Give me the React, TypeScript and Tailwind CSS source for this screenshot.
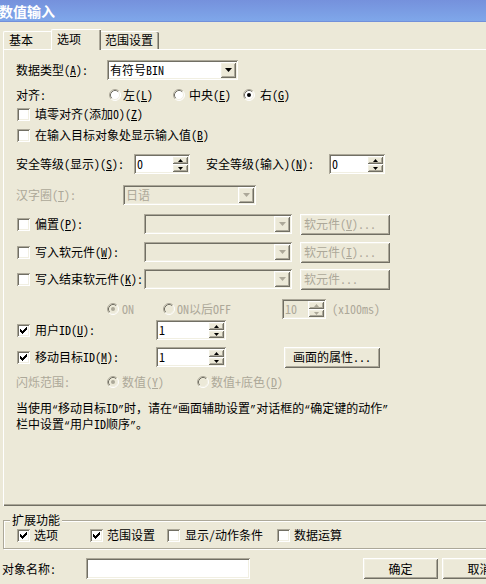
import React from "react";

const sunken =
  "shadow-[inset_1px_1px_0_#ACA899,inset_-1px_-1px_0_#FFFFFF,inset_2px_2px_0_#716F64,inset_-2px_-2px_0_#F1EFE2]";
const raised =
  "shadow-[inset_1px_1px_0_#FFFFFF,inset_-1px_-1px_0_#716F64,inset_2px_2px_0_#F1EFE2,inset_-2px_-2px_0_#ACA899]";
const dis = "text-[#ACA899]";

// classic check mark, pixel by pixel
const CHECK = [
  [3, 5], [3, 6], [3, 7],
  [4, 6], [4, 7], [4, 8],
  [5, 7], [5, 8], [5, 9],
  [6, 6], [6, 7], [6, 8],
  [7, 5], [7, 6], [7, 7],
  [8, 4], [8, 5], [8, 6],
  [9, 3], [9, 4], [9, 5],
];

function Acc({ k }: { k: string }) {
  return (
    <>
      (<span className="underline underline-offset-1">{k}</span>)
    </>
  );
}

// half-width curly quotes, as the dialog font draws them
function Q({ children }: { children: string }) {
  return <span className="font-['Liberation_Mono',monospace] text-[10px]">{children}</span>;
}

function Check({ checked = false }: { checked?: boolean }) {
  return (
    <span className={`inline-flex w-[13px] h-[13px] shrink-0 bg-white ${sunken}`}>
      {checked && (
        <svg width="13" height="13" viewBox="0 0 13 13" shapeRendering="crispEdges">
          {CHECK.map(([x, y]) => (
            <rect key={`${x}-${y}`} x={x} y={y} width="1" height="1" fill="#000" />
          ))}
        </svg>
      )}
    </span>
  );
}

function Radio({ on = false, disabled = false }: { on?: boolean; disabled?: boolean }) {
  return (
    <svg width="12" height="12" viewBox="0 0 12 12" className="shrink-0">
      <circle cx="6" cy="6" r="5" fill={disabled ? "#ECE9D8" : "#FFFFFF"} />
      <path d="M2.11 9.89 A5.5 5.5 0 0 1 9.89 2.11" fill="none" stroke="#ACA899" />
      <path d="M9.89 2.11 A5.5 5.5 0 0 1 2.11 9.89" fill="none" stroke="#FFFFFF" />
      <path d="M2.82 9.18 A4.5 4.5 0 0 1 9.18 2.82" fill="none" stroke="#716F64" />
      <path d="M9.18 2.82 A4.5 4.5 0 0 1 2.82 9.18" fill="none" stroke="#F1EFE2" />
      {on && <circle cx="6" cy="6" r="2" fill={disabled ? "#ACA899" : "#000"} />}
    </svg>
  );
}

function Combo({ w, text = "", disabled = false }: { w: string; text?: string; disabled?: boolean }) {
  return (
    <div className={`${w} shrink-0 h-[20px] flex items-center p-[2px] ${disabled ? "bg-[#ECE9D8]" : "bg-white"} ${sunken}`}>
      <span className={`flex-1 pl-[1px] ${disabled ? dis : ""}`}>{text}</span>
      <span className={`w-[16px] h-[16px] flex items-center justify-center bg-[#ECE9D8] ${raised}`}>
        <svg width="7" height="4" viewBox="0 0 7 4">
          <path d="M0 0H7L3.5 4Z" fill={disabled ? "#ACA899" : "#000"} />
        </svg>
      </span>
    </div>
  );
}

function Spin({ w, value, disabled = false }: { w: string; value: string; disabled?: boolean }) {
  const arrow = disabled ? "#ACA899" : "#000";
  return (
    <div className={`${w} shrink-0 h-[20px] flex p-[2px] ${disabled ? "bg-[#ECE9D8]" : "bg-white"} ${sunken}`}>
      <span className={`flex-1 flex items-center pl-[1px] ${disabled ? dis : ""}`}>{value}</span>
      <span className="w-[16px] flex flex-col">
        <span className={`flex-1 flex items-center justify-center bg-[#ECE9D8] ${raised}`}>
          <svg width="5" height="3" viewBox="0 0 5 3">
            <path d="M0 3H5L2.5 0Z" fill={arrow} />
          </svg>
        </span>
        <span className={`flex-1 flex items-center justify-center bg-[#ECE9D8] ${raised}`}>
          <svg width="5" height="3" viewBox="0 0 5 3">
            <path d="M0 0H5L2.5 3Z" fill={arrow} />
          </svg>
        </span>
      </span>
    </div>
  );
}

function Btn({
  w,
  children,
  disabled = false,
}: {
  w: string;
  children: React.ReactNode;
  disabled?: boolean;
}) {
  return (
    <div
      className={`${w} shrink-0 h-[21px] flex items-center bg-[#ECE9D8] ${raised} ${
        disabled ? `${dis} justify-start pl-[4px]` : "justify-center"
      }`}
    >
      {children}
    </div>
  );
}

export default function App() {
  return (
    <div className="w-[486px] h-[584px] overflow-hidden bg-[#ECE9D8] text-black text-[12px] leading-none font-['Noto_Sans_Mono_CJK_SC','Noto_Sans_CJK_SC',sans-serif]">
      {/* title bar */}
      <div className="h-[22px] flex items-center bg-linear-to-b from-[#7591DC] via-[#7A9CE3] to-[#7FA7EA] border-b border-[#7290DA]">
        <span className="-ml-[1px] text-[14px] font-bold text-white">数值输入</span>
      </div>

      {/* tabs */}
      <div className="mt-[7px] h-[20px] flex items-end pl-[3px]">
        <div className="w-[48px] h-[18px] pl-[5px] pt-[2px] border-l border-t border-white rounded-tl-[2px]">基本</div>
        <div className="relative z-10 w-[50px] h-[21px] -mb-px pl-[5px] pt-[3px] bg-[#ECE9D8] border-l border-t border-white rounded-tl-[2px] shadow-[inset_-1px_0_0_#716F64,inset_-2px_0_0_#ACA899]">
          选项
        </div>
        <div className="w-[58px] h-[18px] pl-[4px] pt-[2px] border-t border-white rounded-tr-[2px] shadow-[inset_-1px_0_0_#716F64,inset_-2px_0_0_#ACA899]">
          范围设置
        </div>
      </div>

      {/* tab page */}
      <div className="ml-[3px] w-[500px] h-[457px] border-l border-t border-white pl-[12px] shadow-[inset_0_-1px_0_#716F64,inset_0_-2px_0_#ACA899]">
        <div className="mt-[10px] h-[20px] flex items-center">
          <span className="w-[91px]">
            数据类型<Acc k="A" />:
          </span>
          <Combo w="w-[131px]" text="有符号BIN" />
        </div>

        <div className="mt-[8px] h-[14px] flex items-center">
          <span className="w-[93px]">对齐:</span>
          <span className="w-[64px] flex items-center">
            <Radio />
            <span className="ml-[2px]">
              左<Acc k="L" />
            </span>
          </span>
          <span className="w-[70px] flex items-center">
            <Radio />
            <span className="ml-[4px]">
              中央<Acc k="E" />
            </span>
          </span>
          <span className="flex items-center">
            <Radio on />
            <span className="ml-[5px]">
              右<Acc k="G" />
            </span>
          </span>
        </div>

        <div className="mt-[5px] h-[14px] flex items-center pl-[1px]">
          <Check />
          <span className="ml-[5px]">
            填零对齐(添加0)<Acc k="Z" />
          </span>
        </div>

        <div className="mt-[7px] h-[14px] flex items-center pl-[1px]">
          <Check />
          <span className="ml-[5px]">
            在输入目标对象处显示输入值<Acc k="B" />
          </span>
        </div>

        <div className="mt-[12px] h-[20px] flex items-center">
          <span className="w-[118px]">
            安全等级(显示)<Acc k="S" />:
          </span>
          <Spin w="w-[56px]" value="0" />
          <span className="ml-[16px] w-[123px]">
            安全等级(输入)<Acc k="N" />:
          </span>
          <Spin w="w-[56px]" value="0" />
        </div>

        <div className="mt-[11px] h-[20px] flex items-center">
          <span className={`w-[107px] ${dis}`}>
            汉字圈<Acc k="T" />:
          </span>
          <Combo w="w-[133px]" text="日语" disabled />
        </div>

        <div className="mt-[9px] h-[20px] flex items-center">
          <span className="w-[128px] flex items-center pl-[1px]">
            <Check />
            <span className="ml-[5px]">
              偏置<Acc k="P" />:
            </span>
          </span>
          <Combo w="w-[148px]" disabled />
          <span className="ml-[8px]">
            <Btn w="w-[90px]" disabled>
              软元件<Acc k="V" />...
            </Btn>
          </span>
        </div>

        <div className="mt-[8px] h-[20px] flex items-center">
          <span className="w-[128px] flex items-center pl-[1px]">
            <Check />
            <span className="ml-[5px]">
              写入软元件<Acc k="W" />:
            </span>
          </span>
          <Combo w="w-[148px]" disabled />
          <span className="ml-[8px]">
            <Btn w="w-[90px]" disabled>
              软元件<Acc k="I" />...
            </Btn>
          </span>
        </div>

        <div className="mt-[7px] h-[20px] flex items-center">
          <span className="w-[128px] flex items-center pl-[1px]">
            <Check />
            <span className="ml-[5px]">
              写入结束软元件<Acc k="K" />:
            </span>
          </span>
          <Combo w="w-[148px]" disabled />
          <span className="ml-[8px]">
            <Btn w="w-[90px]" disabled>
              软元件...
            </Btn>
          </span>
        </div>

        <div className="mt-[10px] h-[20px] flex items-center">
          <span className="w-[91px]" />
          <span className="w-[56px] flex items-center">
            <Radio on disabled />
            <span className={`ml-[3px] ${dis}`}>ON</span>
          </span>
          <span className="w-[119px] flex items-center">
            <Radio disabled />
            <span className={`ml-[2px] ${dis}`}>ON以后OFF</span>
          </span>
          <Spin w="w-[44px]" value="10" disabled />
          <span className={`ml-[6px] ${dis}`}>(x100ms)</span>
        </div>

        <div className="mt-[1px] h-[20px] flex items-center">
          <span className="w-[140px] flex items-center pl-[1px]">
            <Check checked />
            <span className="ml-[5px]">
              用户ID<Acc k="U" />:
            </span>
          </span>
          <Spin w="w-[70px]" value="1" />
        </div>

        <div className="mt-[7px] h-[20px] flex items-center">
          <span className="w-[140px] flex items-center pl-[1px]">
            <Check checked />
            <span className="ml-[5px]">
              移动目标ID<Acc k="M" />:
            </span>
          </span>
          <Spin w="w-[70px]" value="1" />
          <span className="ml-[58px]">
            <Btn w="w-[96px]">画面的属性...</Btn>
          </span>
        </div>

        <div className="mt-[8px] h-[14px] flex items-center">
          <span className={`w-[91px] ${dis}`}>闪烁范围:</span>
          <span className="w-[90px] flex items-center">
            <Radio on disabled />
            <span className={`ml-[3px] ${dis}`}>
              数值<Acc k="Y" />
            </span>
          </span>
          <span className="flex items-center">
            <Radio disabled />
            <span className={`ml-[2px] ${dis}`}>
              数值+底色<Acc k="D" />
            </span>
          </span>
        </div>

        <div className="mt-[12px] leading-[13px]">
          <div>
            当使用<Q>“</Q>移动目标ID<Q>”</Q>时，请在<Q>“</Q>画面辅助设置<Q>”</Q>对话框的<Q>“</Q>确定键的动作<Q>”</Q>
          </div>
          <div>
            栏中设置<Q>“</Q>用户ID顺序<Q>”</Q>。
          </div>
        </div>
      </div>

      {/* extension group */}
      <fieldset className="mt-[8px] ml-[3px] w-[500px] min-w-0 border border-[#ACA899] shadow-[inset_1px_1px_0_#FFFFFF,1px_1px_0_#FFFFFF]">
        <legend className="ml-[6px] px-[2px] leading-[12px] bg-[#ECE9D8]">扩展功能</legend>
        <div className="h-[18px] mb-[4px] flex items-center pl-[13px]">
          <span className="w-[73px] flex items-center">
            <Check checked />
            <span className="ml-[4px]">选项</span>
          </span>
          <span className="w-[77px] flex items-center">
            <Check checked />
            <span className="ml-[4px]">范围设置</span>
          </span>
          <span className="w-[110px] flex items-center">
            <Check />
            <span className="ml-[5px]">显示/动作条件</span>
          </span>
          <span className="flex items-center">
            <Check />
            <span className="ml-[4px]">数据运算</span>
          </span>
        </div>
      </fieldset>

      {/* bottom row */}
      <div className="mt-[9px] w-[540px] h-[21px] flex items-center pl-[2px]">
        <span className="w-[84px] shrink-0">对象名称:</span>
        <div className={`w-[164px] shrink-0 h-[21px] bg-white ${sunken}`} />
        <span className="ml-[113px] shrink-0">
          <Btn w="w-[75px]">确定</Btn>
        </span>
        <span className="ml-[4px] shrink-0">
          <Btn w="w-[75px]">取消</Btn>
        </span>
      </div>
    </div>
  );
}
